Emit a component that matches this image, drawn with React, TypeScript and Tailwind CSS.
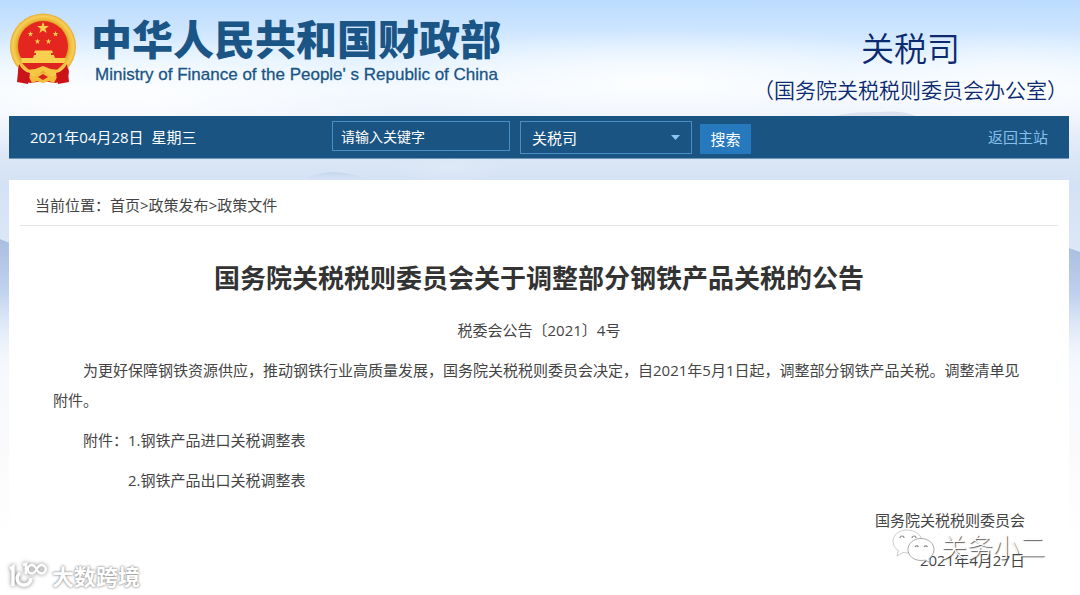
const attachments = ["1.钢铁产品进口关税调整表", "2.钢铁产品出口关税调整表"];

function Landscape() {
  return (
    <svg
      className="absolute inset-x-0 top-0 -z-10 h-[595px] w-full"
      viewBox="0 0 1080 595"
      preserveAspectRatio="none"
      aria-hidden="true"
    >
      <defs>
        <linearGradient id="sky" x1="0" y1="0" x2="0" y2="1">
          <stop offset="0" stopColor="#bbdcff" />
          <stop offset="0.04" stopColor="#c9e3ff" />
          <stop offset="0.1" stopColor="#e2f1ff" />
          <stop offset="0.15" stopColor="#f1f8ff" />
          <stop offset="0.19" stopColor="#eef3fc" />
          <stop offset="0.27" stopColor="#dae6f5" />
          <stop offset="0.31" stopColor="#d4e2f5" />
          <stop offset="0.4" stopColor="#dbe6f6" />
          <stop offset="0.6" stopColor="#f4f8fd" />
          <stop offset="0.75" stopColor="#fafafc" />
          <stop offset="0.9" stopColor="#ffffff" />
        </linearGradient>
        <linearGradient id="ridge" x1="0" y1="0" x2="0" y2="1">
          <stop offset="0" stopColor="#a9bee1" />
          <stop offset="0.4" stopColor="#c0d2ee" />
          <stop offset="1" stopColor="#f2f7fd" stopOpacity="0" />
        </linearGradient>
        <radialGradient id="glow">
          <stop offset="0" stopColor="#ffffff" stopOpacity="0.85" />
          <stop offset="1" stopColor="#ffffff" stopOpacity="0" />
        </radialGradient>
        <linearGradient id="hill" x1="0" y1="0" x2="0" y2="1">
          <stop offset="0" stopColor="#c3d3ec" />
          <stop offset="1" stopColor="#d4e2f5" stopOpacity="0" />
        </linearGradient>
      </defs>
      <rect width="1080" height="595" fill="url(#sky)" />
      <ellipse cx="110" cy="95" rx="330" ry="62" fill="url(#glow)" />
      <ellipse cx="660" cy="80" rx="330" ry="50" fill="url(#glow)" />
      <ellipse cx="1010" cy="85" rx="180" ry="55" fill="url(#glow)" />
      <ellipse cx="450" cy="168" rx="60" ry="14" fill="url(#glow)" opacity="0.2" />
      <path d="M835 116C855 111 870 113 880 112S905 111 915 116Z" fill="#d3dcea" opacity="0.7" />
      <path d="M300 180C315 173 330 171 343 173S362 176 370 180Z" fill="url(#hill)" />
      <path d="M0 239L12 244V370H0Z" fill="url(#ridge)" />
      <path d="M1066 247L1080 252V370H1066Z" fill="url(#ridge)" />
    </svg>
  );
}

function Emblem() {
  return (
    <svg className="h-[72px] w-[68px] shrink-0" viewBox="0 0 68 72" role="img" aria-label="国徽">
      <defs>
        <radialGradient id="gold">
          <stop offset="0.72" stopColor="#c98a16" />
          <stop offset="0.82" stopColor="#eeb93a" />
          <stop offset="0.92" stopColor="#f6cf58" />
          <stop offset="1" stopColor="#e8ac32" />
        </radialGradient>
        <path id="star" d="M0-1L.235-.324.951-.309.38.124.588.809 0 .4-.588.809-.38.124-.951-.309-.235-.324Z" />
      </defs>
      <path d="M10 50L9 60 10 69 22 71 34 69 46 71 58 69 60 60 58 50Z" fill="#d5161a" />
      <circle cx="34" cy="34.500" r="33" fill="url(#gold)" />
      <circle cx="34" cy="34" r="25" fill="#e52620" />
      <g fill="#f8cf4e">
        <use href="#star" transform="translate(34 16) scale(6.2)" />
        <use href="#star" transform="translate(21.5 22) scale(3)" />
        <use href="#star" transform="translate(46.500 22) scale(3)" />
        <use href="#star" transform="translate(28.500 29.500) scale(3)" />
        <use href="#star" transform="translate(39.500 29.500) scale(3)" />
        <path d="M26 38.500H43L44 41H42V43H45L46 46H57L55 51H13L12 46H24L25 43H27V41H25Z" />
      </g>
      <path d="M13 51H55L48 58 34 55 20 58Z" fill="#dc2420" />
      <path d="M10 52C13 57 16 60 21 61L19 72 8 70 9 60Z" fill="#c91318" />
      <path d="M58 52C55 57 52 60 47 61L49 72 60 70 59 60Z" fill="#c91318" />
      <path
        d="M16 55C22 61 27 56 34 54 41 56 46 61 52 55 49 62 43 62 39 62L34 59 29 62C25 62 19 62 16 55Z"
        fill="#f5c743"
      />
      <path
        d="M20 65C24 64 27 65 29 62H39C41 65 44 64 48 65L45 71 40 69 34 71 28 69 23 71Z"
        fill="#f2be3a"
      />
      <path d="M29 65L34 62 39 65 34 68Z" fill="#d8231c" />
    </svg>
  );
}

function ChatBubbles() {
  return (
    <svg className="h-9 w-11" viewBox="0 0 44 36" aria-hidden="true">
      <g fill="#ffffff" stroke="#a8a8a8" strokeWidth="1">
        <path
          d="M16 2C8 2 2 7 2 13.500 2 17.500 4 20.500 7.500 22.500L6 28 12 24.500C13 24.800 15 25 16 25 24 25 31 20 31 13.500S24 2 16 2Z"
          strokeOpacity="0.6"
        />
        <path d="M30 10.500C22.500 10.500 17 15.500 17 21.500S22.500 32.500 30 32.500C31.500 32.500 33 32.300 34 32L39 34.500 38 30.500C41 28.500 43 25 43 21.500 43 15.500 37.500 10.500 30 10.500Z" />
      </g>
      <g fill="none" stroke="#8a8a8a" strokeWidth="1.200">
        <path d="M9 10a2 2 0 0 1 4 0M21 10a2 2 0 0 1 4 0M24 19a2 2 0 0 1 3.500 0M33 19a2 2 0 0 1 3.500 0" />
      </g>
    </svg>
  );
}

function HundredMark() {
  return (
    <svg className="h-7 w-10 drop-shadow-[0_0_2px_#777777]" viewBox="0 0 40 28" aria-hidden="true">
      <g fill="none" stroke="#ffffff" strokeWidth="3.400">
        <path d="M2 8L5 6V25M12 12C7 16 9 23 15 24 20 24.500 23 21 23 17" />
        <path d="M15 4L18 3V13" strokeWidth="2.800" />
        <path
          d="M28.500 8C27 5.500 26 4 24 4a4 4 0 0 0 0 8.500C26 12.500 27 11 28.500 8.500 30 5.500 31 4 33.500 4a4.200 4.200 0 0 1 0 8.500C31 12.500 30 11 28.500 8Z"
          strokeWidth="2.400"
        />
      </g>
    </svg>
  );
}

export default function App() {
  return (
    <div className="relative isolate min-h-screen bg-white font-['Open_Sans','Noto_Sans_CJK_SC',sans-serif] text-[15px] leading-[30px] text-[#444444]">
      <Landscape />

      <header className="flex h-[116px] items-start justify-between pl-[9px] pr-3">
        <div className="flex gap-[14px] pt-3">
          <Emblem />
          <div className="text-[#1a5586]">
            <p className="font-['Noto_Sans_CJK_SC',sans-serif] text-[41px] font-black leading-[50px]">
              中华人民共和国财政部
            </p>
            <p className="pl-1 pt-[3px] font-['Liberation_Sans',sans-serif] text-[17px] leading-5 [-webkit-text-stroke:0.3px_#1a5586]">
              Ministry of Finance of the People' s Republic of China
            </p>
          </div>
        </div>
        <div className="pt-[27px] text-center font-['Noto_Sans_CJK_SC',sans-serif] text-[#0b2a70]">
          <p className="text-[33px] font-[350] leading-10">关税司</p>
          <p className="text-[21px] font-[350] leading-[44px]">（国务院关税税则委员会办公室）</p>
        </div>
      </header>

      <div className="ml-[9px] mr-[11px] flex h-[43px] border-b border-[#6f97b8] bg-[#1a5482] pl-[21px] pr-[21px] text-white">
        <p className="w-[302px] whitespace-pre leading-[42px]">2021年04月28日  星期三</p>
        <form className="flex flex-1 items-start pt-[5px]" onSubmit={(e) => e.preventDefault()}>
          <input
            aria-label="关键字"
            defaultValue="请输入关键字"
            className="h-[30px] w-[178px] border border-[#4a8ec6] bg-transparent px-2 text-sm text-white outline-none"
          />
          <div className="relative ml-[10px]">
            <select
              aria-label="站点"
              className="h-[33px] w-[172px] appearance-none border border-[#4a8ec6] bg-[#1a5482] px-[11px] text-[15px] text-white outline-none"
            >
              <option>关税司</option>
            </select>
            <svg
              className="pointer-events-none absolute right-3 top-[14px] h-[5px] w-[9px]"
              viewBox="0 0 9 5"
              aria-hidden="true"
            >
              <path d="M0 0H9L4.500 5Z" fill="#8cc6f2" />
            </svg>
          </div>
          <button type="submit" className="ml-2 mt-[3px] h-[30px] w-[51px] bg-[#2679bd] text-[15px] leading-7">
            搜索
          </button>
        </form>
        <a href="#" className="leading-[42px] text-[#86bfea]">
          返回主站
        </a>
      </div>

      <main className="ml-[9px] mr-[11px] mt-[21px] bg-white pb-[19px]">
        <nav aria-label="当前位置" className="mx-[11px] border-b border-[#e6e6e6] px-[15px] pb-[5px] pt-[10px]">
          当前位置：<a href="#">首页</a>&gt;<a href="#">政策发布</a>&gt;<a href="#">政策文件</a>
        </nav>

        <article className="px-11">
          <h1 className="pt-8 text-center text-[26px] font-bold leading-10 text-[#333333]">
            国务院关税税则委员会关于调整部分钢铁产品关税的公告
          </h1>
          <div className="space-y-[10px] pt-[17px]">
            <p className="text-center">税委会公告〔2021〕4号</p>
            <p className="indent-[30px]">
              为更好保障钢铁资源供应，推动钢铁行业高质量发展，国务院关税税则委员会决定，自2021年5月1日起，调整部分钢铁产品关税。调整清单见附件。
            </p>
            <div className="flex pl-[30px]">
              <span>附件：</span>
              <ul className="space-y-[10px]">
                {attachments.map((name) => (
                  <li key={name}>{name}</li>
                ))}
              </ul>
            </div>
            <p className="text-right">国务院关税税则委员会</p>
            <p className="text-right">2021年4月27日</p>
          </div>
        </article>
      </main>

      <div className="absolute right-[35px] top-[528px] flex items-center gap-[6px]">
        <ChatBubbles />
        <span className="font-['Noto_Sans_CJK_SC',sans-serif] text-[26px] font-light leading-9 text-white [text-shadow:1px_1px_1px_#555555]">
          关务小二
        </span>
      </div>
      <div className="absolute left-[8px] top-[559px] flex items-center gap-1">
        <HundredMark />
        <span className="font-['Noto_Sans_CJK_SC',sans-serif] text-[22px] font-bold leading-8 text-white [text-shadow:0_0_2px_#888888,0_0_3px_#aaaaaa]">
          大数跨境
        </span>
      </div>
    </div>
  );
}
